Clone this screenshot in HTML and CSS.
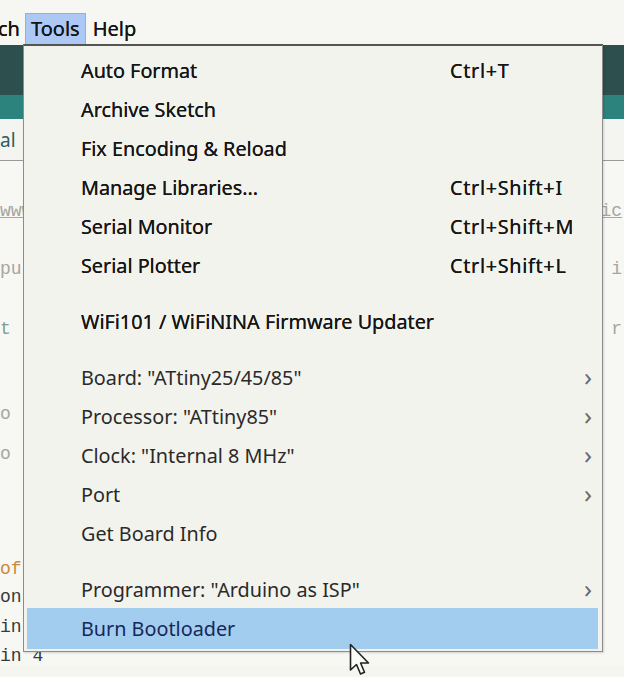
FILE: index.html
```html
<!DOCTYPE html>
<html>
<head>
<meta charset="utf-8">
<link rel="stylesheet" href="styles.css">
</head>
<body>
<div class="menubar">
  <span class="mb-item mb-cut">ch</span>
  <span class="mb-item mb-active">Tools</span>
  <span class="mb-item">Help</span>
</div>
<div class="ide">
  <div class="toolbar"></div>
  <div class="toolbar-strip"></div>
  <div class="tabs"><span class="tab-name">al</span></div>
  <div class="editor">
    <div class="code-line l1"><span class="u">www</span><span class="u">ic</span></div>
    <div class="code-line l2"><span>pu</span><span>i</span></div>
    <div class="code-line l3"><span class="green">t</span><span>r</span></div>
    <div class="code-line l4"><span>o</span><span></span></div>
    <div class="code-line l5"><span>o</span><span></span></div>
    <div class="code-line l6"><span class="orange">of</span><span></span></div>
    <div class="code-line l7"><span class="dark">on</span><span></span></div>
    <div class="code-line l8"><span class="dark">in</span><span></span></div>
    <div class="code-line l9"><span class="dark">in 4</span><span></span></div>
  </div>
</div>

<div class="menu">
  <div class="item"><span class="label">Auto Format</span><span class="key">Ctrl+T</span></div>
  <div class="item"><span class="label">Archive Sketch</span><span class="key"></span></div>
  <div class="item"><span class="label">Fix Encoding &amp; Reload</span><span class="key"></span></div>
  <div class="item"><span class="label">Manage Libraries...</span><span class="key">Ctrl+Shift+I</span></div>
  <div class="item"><span class="label">Serial Monitor</span><span class="key">Ctrl+Shift+M</span></div>
  <div class="item"><span class="label">Serial Plotter</span><span class="key">Ctrl+Shift+L</span></div>
  <div class="sep"></div>
  <div class="item"><span class="label">WiFi101 / WiFiNINA Firmware Updater</span><span class="key"></span></div>
  <div class="sep"></div>
  <div class="item sub"><span class="label">Board: "ATtiny25/45/85"</span><span class="arrow">&#x203A;</span></div>
  <div class="item sub"><span class="label">Processor: "ATtiny85"</span><span class="arrow">&#x203A;</span></div>
  <div class="item sub"><span class="label">Clock: "Internal 8 MHz"</span><span class="arrow">&#x203A;</span></div>
  <div class="item sub"><span class="label">Port</span><span class="arrow">&#x203A;</span></div>
  <div class="item sub"><span class="label">Get Board Info</span><span class="key"></span></div>
  <div class="sep"></div>
  <div class="item sub"><span class="label">Programmer: "Arduino as ISP"</span><span class="arrow">&#x203A;</span></div>
  <div class="item selected"><span class="label">Burn Bootloader</span><span class="key"></span></div>
</div>

<svg class="cursor" width="24" height="36" viewBox="0 0 24 36">
  <path d="M1.5 1.5 L1.5 27 L7.5 21.5 L11.5 31 L15.5 29.3 L11.6 20 L19.5 20 Z" fill="#fbfbf8" stroke="#222" stroke-width="1.6" stroke-linejoin="round"/>
</svg>
</body>
</html>
```

FILE: styles.css
```css
html, body {
  margin: 0;
  padding: 0;
}
body {
  width: 624px;
  height: 677px;
  overflow: hidden;
  background: #f6f6f1;
  font-family: "Noto Sans", "Open Sans", sans-serif;
  color: #161616;
  position: relative;
}
.menubar {
  height: 45px;
  display: flex;
  align-items: flex-end;
  background: #f6f6f2;
  box-sizing: border-box;
  padding-bottom: 0;
}
.mb-item {
  font-size: 20px;
  line-height: 32px;
  height: 32px;
  padding: 0 7px;
  color: #141414;
  text-shadow: 0 0 0.4px #141414;
}
.mb-cut {
  padding-left: 0;
  padding-right: 5px;
  margin-left: -2px;
}
.mb-active {
  background: #adc8f4;
  box-shadow: inset 0 0 0 1px #8fb0ea;
  padding: 0 6px;
}
.ide {
  display: flex;
  flex-direction: column;
}
.toolbar {
  height: 50px;
  background: #2d4f4d;
}
.toolbar-strip {
  height: 24px;
  background: #2c837d;
}
.tabs {
  height: 41px;
  border-bottom: 1px solid #9a9a9a;
  display: flex;
  align-items: center;
  background: #f4f4f0;
}
.tab-name {
  font-size: 19px;
  color: #2c5f62;
}
.editor {
  display: flex;
  flex-direction: column;
  font-family: "Liberation Mono", monospace;
  font-size: 18px;
  color: #a6a6a0;
  background: #f7f7f4;
}
.code-line {
  display: flex;
  justify-content: space-between;
  height: 20px;
  line-height: 20px;
  padding-right: 2px;
}
.u { text-decoration: underline; }
.l1 { margin-top: 40px; }
.l2 { margin-top: 38px; }
.l3 { margin-top: 40px; }
.l4 { margin-top: 65px; }
.l5 { margin-top: 20px; }
.l6 { margin-top: 95px; }
.l7 { margin-top: 8px; }
.l8 { margin-top: 10px; }
.l9 { margin-top: 9px; }
.green { color: #7fa08c; }
.orange { color: #c98b3d; }
.dark { color: #3a3a3a; }
.menu {
  position: absolute;
  left: 23px;
  top: 44px;
  width: 580px;
  height: 608px;
  box-sizing: border-box;
  background: #f3f3ee;
  border: 1px solid #8c8c8c;
  border-top: 2px solid #555;
  box-shadow: 1px 1px 2px rgba(0,0,0,0.15);
  padding: 5px 4px 0 3px;
  display: flex;
  flex-direction: column;
}
.item {
  height: 39px;
  flex: none;
  display: flex;
  align-items: center;
  padding-left: 54px;
  padding-right: 2px;
  font-size: 19.8px;
  color: #161616;
  text-shadow: 0 0 0.4px #161616;
}
.sub { color: #2a2a2a; text-shadow: none; }
.label { flex: 1; white-space: nowrap; }
.key {
  width: 146px;
  white-space: nowrap;
  letter-spacing: 0.7px;
}
.arrow {
  width: 12px;
  font-size: 26px;
  color: #6a6a6a;
  line-height: 20px;
  margin-top: -4px;
}
.sep {
  height: 17px;
  flex: none;
}
.selected {
  background: #a3cdef;
  color: #17275a;
  text-shadow: none;
  height: 41px;
  margin-top: -1px;
}
.cursor {
  position: absolute;
  left: 349px;
  top: 643px;
}
```
